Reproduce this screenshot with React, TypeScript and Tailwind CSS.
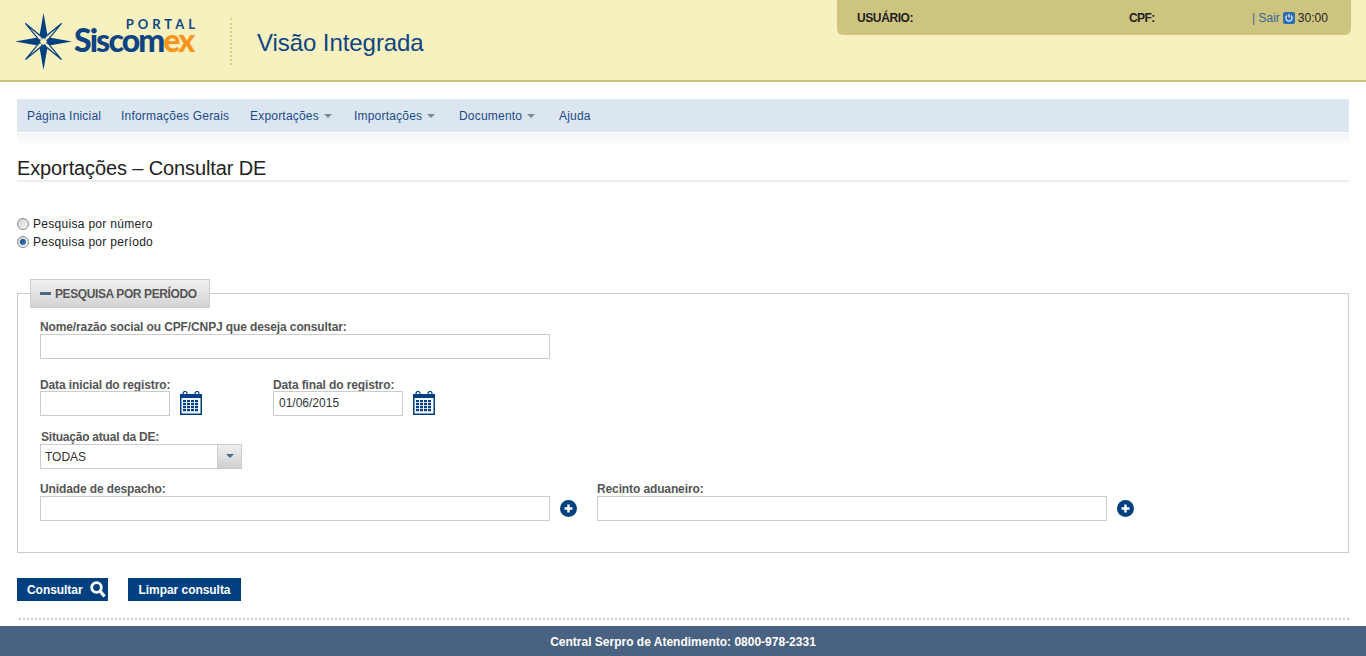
import React from 'react';

const font = "font-['Liberation_Sans',Arial,sans-serif]";
const blue = '#004080';

const StarLogo = () => (
  <svg width="57" height="59" viewBox="0 0 60 60" className="shrink-0">
    {/* main points */}
    <polygon points="30,0 34.5,25.5 60,30 34.5,34.5 30,60 25.5,34.5 0,30 25.5,25.5" fill={blue} />
    {/* diagonal points */}
    <g fill="#f6f1bf" stroke={blue} strokeWidth="1.3" strokeLinejoin="miter">
      <polygon points="11,11 28,25 30,30 25,28" />
      <polygon points="49,11 35,28 30,30 32,25" />
      <polygon points="11,49 25,32 30,30 28,35" />
      <polygon points="49,49 32,35 30,30 35,32" />
    </g>
    <polygon points="30,26 34,30 30,34 26,30" fill="#f6f1bf" />
  </svg>
);

const PowerIcon = () => (
  <span className="flex h-[12px] w-[12px] items-center justify-center rounded-[2px] bg-[#2f6cb0]">
    <svg width="10" height="10" viewBox="0 0 10 10" fill="none" stroke="#dfeaf5" strokeWidth="1.3">
      <path d="M3 2.6a3.1 3.1 0 1 0 4 0" />
      <path d="M5 1v3.4" />
    </svg>
  </span>
);

const NavItem = ({ label, caret, className }: { label: string; caret?: boolean; className: string }) => (
  <a className={`flex items-center text-[12px] tracking-[0.2px] text-[#1c4a8c] ${className}`}>
    {label}
    {caret && <span className="ml-[5px] mt-[1px] h-0 w-0 border-x-[4px] border-t-[4px] border-x-transparent border-t-[#7d8793]" />}
  </a>
);

const Radio = ({ checked }: { checked?: boolean }) => (
  <span className="flex h-[12px] w-[12px] items-center justify-center rounded-full border border-[#8a8a8a] bg-gradient-to-br from-[#cfcfcf] to-[#fbfbfb]">
    {checked && <span className="h-[6px] w-[6px] rounded-full bg-gradient-to-br from-[#0f3f78] to-[#3f86c8]" />}
  </span>
);

const Label = ({ children, className = '' }: { children: React.ReactNode; className?: string }) => (
  <label className={`block text-[12px] font-bold leading-[14px] tracking-[-0.12px] text-[#555555] ${className}`}>{children}</label>
);

const Field = ({ width, value }: { width: string; value?: string }) => (
  <input
    readOnly
    value={value ?? ''}
    className={`${width} h-[25px] border border-[#cccccc] bg-white px-[5px] text-[12px] text-[#333333] outline-none`}
  />
);

const CalendarIcon = () => (
  <svg width="22" height="24" viewBox="0 0 22 24" className="shrink-0">
    <rect x="0" y="3" width="22" height="21" fill={blue} />
    <rect x="1.5" y="6" width="19" height="16.5" fill="#f4f7fb" />
    <rect x="0" y="3" width="22" height="4" fill={blue} />
    <circle cx="5" cy="2.5" r="2" fill="none" stroke={blue} strokeWidth="1.2" />
    <circle cx="17" cy="2.5" r="2" fill="none" stroke={blue} strokeWidth="1.2" />
    <g fill={blue}>
      {[9, 12, 15, 18].map((y) =>
        [3, 7, 11, 15].map((x) => <rect key={`${x}-${y}`} x={x} y={y} width="3" height="2.2" />)
      )}
    </g>
  </svg>
);

const PlusIcon = () => (
  <svg width="17" height="17" viewBox="0 0 17 17" className="shrink-0">
    <circle cx="8.5" cy="8.5" r="8.5" fill={blue} />
    <path d="M8.5 4.5v8M4.5 8.5h8" stroke="#ffffff" strokeWidth="2.4" />
  </svg>
);

const SearchIcon = () => (
  <svg width="16" height="17" viewBox="0 0 16 17" fill="none" stroke="#ffffff">
    <circle cx="6.5" cy="6.5" r="4.8" strokeWidth="2.8" />
    <path d="M10.5 10.5l4 5" strokeWidth="3.2" />
  </svg>
);

export default function App() {
  return (
    <div className={`${font} flex h-[656px] w-[1366px] flex-col overflow-hidden bg-white`}>
      <header className="flex h-[82px] shrink-0 items-start justify-between border-b-2 border-[#cdc480] bg-[#f6f1bf] pl-[14px] pr-[15px]">
        <div className="flex items-center">
          <div className="ml-[1px] mt-[12px]">
            <StarLogo />
          </div>
          <div className="ml-[2px] mt-[18px] w-[121px] self-start font-['Lato',sans-serif]">
            <div className="-mr-[4px] text-right text-[13px] font-bold leading-[12px] tracking-[4px] text-[#0f4483]">PORTAL</div>
            <div className="-mt-[2px] whitespace-nowrap text-[32px] font-black leading-[24px] tracking-[-1.9px] text-[#0f4483]">
              Siscom<span className="text-[#f7941d]">ex</span>
            </div>
          </div>
          <div className="ml-[35px] mt-[12px] h-[47px] border-l-2 border-dotted border-[#d6cb85]" />
          <div className="ml-[25px] mt-[14px] text-[24px] leading-[28px] tracking-[-0.07px] text-[#0f4483]">Visão Integrada</div>
        </div>
        <div className="flex h-[35px] w-[514px] items-center rounded-b-[6px] bg-[#cdc480] pl-[20px] text-[12px] text-[#1e1e1e]">
          <span className="w-[272px] font-bold tracking-[-0.4px]">USUÁRIO:</span>
          <span className="w-[123px] font-bold tracking-[-0.6px]">CPF:</span>
          <span className="mt-[1px] flex items-center">
            <span className="text-[#3d6796]">| Sair</span>
            <span className="ml-[3px] mr-[3px]"><PowerIcon /></span>
            <span>30:00</span>
          </span>
        </div>
      </header>

      <nav className="mx-[17px] mt-[17px] flex h-[34px] shrink-0 items-center border-b border-white bg-[#dce6f0] pl-[10px]">
        <NavItem label="Página Inicial" className="w-[94px]" />
        <NavItem label="Informações Gerais" className="w-[129px]" />
        <NavItem label="Exportações" caret className="w-[104px]" />
        <NavItem label="Importações" caret className="w-[105px]" />
        <NavItem label="Documento" caret className="w-[100px]" />
        <NavItem label="Ajuda" className="w-[40px]" />
      </nav>
      <div className="mx-[17px] h-[12px] shrink-0 bg-gradient-to-b from-[#f3f3f3] to-white" />

      <main className="flex flex-1 flex-col px-[17px]">
        <h1 className="mt-[9px] h-[28px] border-b-2 border-[#ececec] pt-[2px] text-[20px] leading-[25px] tracking-[-0.12px] text-[#222222]">Exportações – Consultar DE</h1>

        <div className="mt-[35px] flex flex-col gap-[4px] text-[12px] leading-[14px] tracking-[0.3px] text-[#222222]">
          <div className="flex items-center gap-[4px]"><Radio /> Pesquisa por número</div>
          <div className="flex items-center gap-[4px]"><Radio checked /> Pesquisa por período</div>
        </div>

        <section className="mt-[44px] h-[260px] border border-[#cccccc] px-[22px]">
          <div className="-mt-[15px] ml-[-10px] flex h-[29px] w-[180px] items-center border border-[#cccccc] bg-gradient-to-b from-[#f1f1f1] to-[#d4d4d4] pl-[9px] text-[12px] font-bold tracking-[-0.4px] text-[#555555]">
            <span className="mr-[4px] h-[3px] w-[11px] bg-[#4a6a85]" />
            PESQUISA POR PERÍODO
          </div>

          <Label className="mt-[12px]">Nome/razão social ou CPF/CNPJ que deseja consultar:</Label>
          <div className="-mt-[1px]"><Field width="w-[510px]" /></div>

          <div className="mt-[19px] flex">
            <div className="w-[233px]">
              <Label>Data inicial do registro:</Label>
              <div className="-mt-[1px] flex items-start gap-[10px]">
                <Field width="w-[130px]" />
                <CalendarIcon />
              </div>
            </div>
            <div>
              <Label>Data final do registro:</Label>
              <div className="-mt-[1px] flex items-start gap-[10px]">
                <Field width="w-[130px]" value="01/06/2015" />
                <CalendarIcon />
              </div>
            </div>
          </div>

          <Label className="ml-[1px] mt-[14px]"><span className="tracking-[-0.22px]">Situação atual da DE:</span></Label>
          <div className="flex h-[25px] w-[202px] border border-[#cccccc] bg-white">
            <span className="flex-1 pl-[4px] text-[12px] leading-[24px] text-[#333333]">TODAS</span>
            <span className="flex w-[24px] items-center justify-center border-l border-[#cccccc] bg-gradient-to-b from-[#f0f0f0] to-[#cfcfcf]">
              <span className="h-0 w-0 border-x-[4px] border-t-[4px] border-x-transparent border-t-[#4a6a85]" />
            </span>
          </div>

          <div className="mt-[13px] flex">
            <div className="w-[557px]">
              <Label>Unidade de despacho:</Label>
              <div className="flex items-center gap-[10px]">
                <Field width="w-[510px]" />
                <PlusIcon />
              </div>
            </div>
            <div>
              <Label>Recinto aduaneiro:</Label>
              <div className="flex items-center gap-[10px]">
                <Field width="w-[510px]" />
                <PlusIcon />
              </div>
            </div>
          </div>
        </section>

        <div className="mt-[25px] flex gap-[20px] text-[12px] font-bold tracking-[-0.05px] text-white">
          <button className="flex h-[23px] w-[91px] items-center gap-[7px] bg-[#004080] pl-[10px]">Consultar <SearchIcon /></button>
          <button className="h-[23px] w-[113px] bg-[#004080]">Limpar consulta</button>
        </div>

        <div className="ml-[2px] mt-[17px] border-t-2 border-dotted border-[#cccccc]" />
      </main>

      <footer className="flex h-[30px] shrink-0 items-center justify-center bg-[#4a6282] pt-[1px] text-[12px] font-bold text-white">
        Central Serpro de Atendimento: 0800-978-2331
      </footer>
    </div>
  );
}
